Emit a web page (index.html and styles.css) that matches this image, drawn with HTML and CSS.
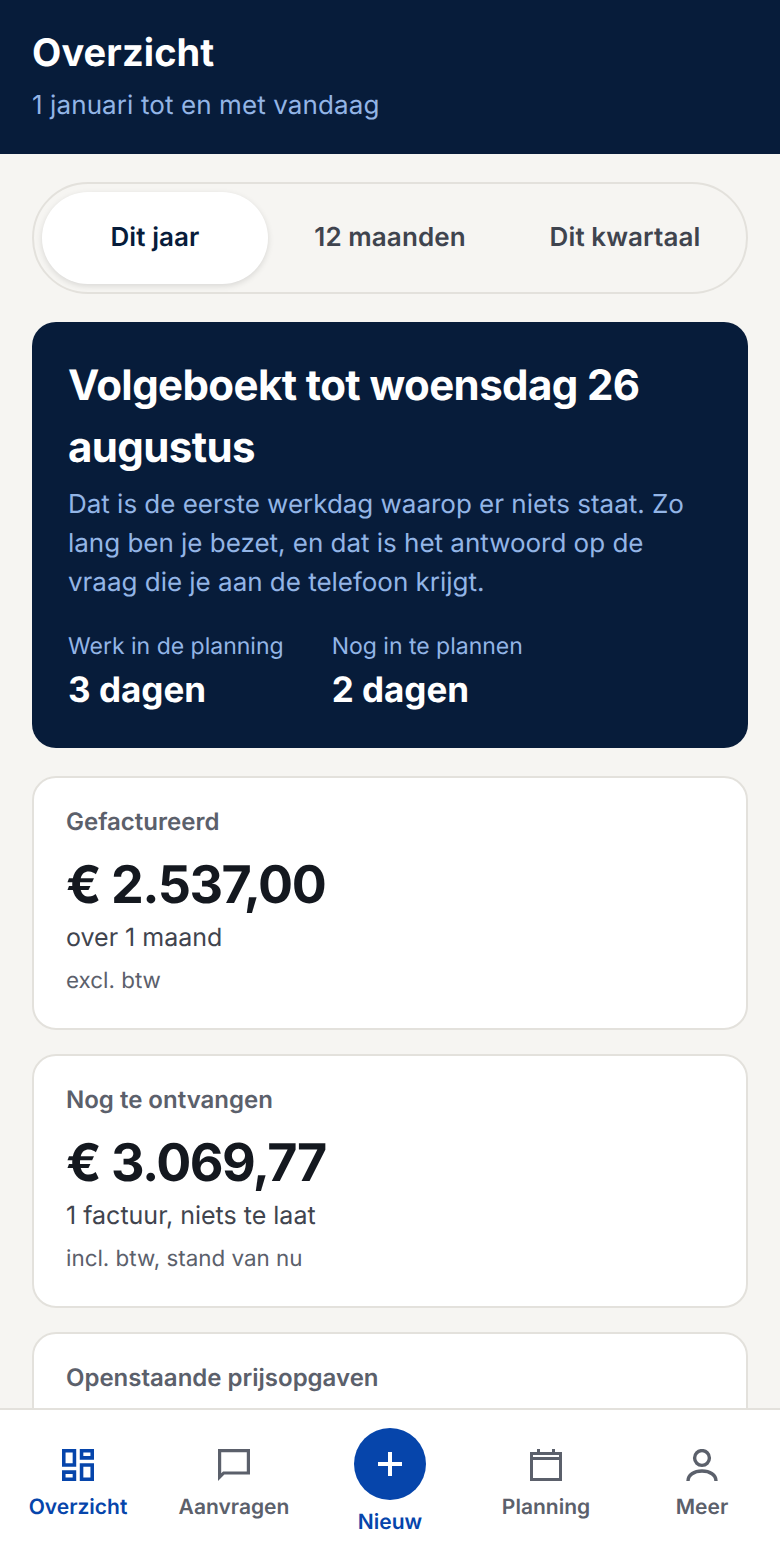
FILE: index.html
```html
<!DOCTYPE html>
<html lang="nl">
<head>
    <meta charset="UTF-8">
    <meta name="viewport" content="width=device-width, initial-scale=1.0">
    <title>Overzicht</title>
    <link rel="stylesheet" href="styles.css">
</head>
<body>
    <div class="app">
        <header class="page-header">
            <h1>Overzicht</h1>
            <p>1 januari tot en met vandaag</p>
        </header>

        <main class="content">
            <div class="period-switch">
                <div class="period-option active">Dit jaar</div>
                <div class="period-option">12 maanden</div>
                <div class="period-option">Dit kwartaal</div>
            </div>

            <section class="hero-card">
                <h2>Volgeboekt tot woensdag 26 augustus</h2>
                <p class="hero-text">Dat is de eerste werkdag waarop er niets staat. Zo lang ben je bezet, en dat is het antwoord op de vraag die je aan de telefoon krijgt.</p>
                <div class="hero-stats">
                    <div>
                        <div class="hero-label">Werk in de planning</div>
                        <div class="hero-value">3 dagen</div>
                    </div>
                    <div>
                        <div class="hero-label">Nog in te plannen</div>
                        <div class="hero-value">2 dagen</div>
                    </div>
                </div>
            </section>

            <section class="stat-card">
                <div class="stat-label">Gefactureerd</div>
                <div class="stat-amount">€ 2.537,00</div>
                <div class="stat-sub">over 1 maand</div>
                <div class="stat-note">excl. btw</div>
            </section>

            <section class="stat-card">
                <div class="stat-label">Nog te ontvangen</div>
                <div class="stat-amount">€ 3.069,77</div>
                <div class="stat-sub">1 factuur, niets te laat</div>
                <div class="stat-note">incl. btw, stand van nu</div>
            </section>

            <section class="stat-card">
                <div class="stat-label">Openstaande prijsopgaven</div>
            </section>
        </main>

        <nav class="bottom-nav">
            <div class="nav-item active">
                <svg class="nav-icon" viewBox="3 3 18 18" fill="currentColor"><path d="M19 5v2h-4V5h4M9 5v6H5V5h4m10 8v6h-4v-6h4M9 17v2H5v-2h4M21 3h-8v6h8V3zM11 3H3v10h8V3zm10 8h-8v10h8V11zm-10 4H3v6h8v-6z"/></svg>
                <span>Overzicht</span>
            </div>
            <div class="nav-item">
                <svg class="nav-icon" viewBox="2 2 20 20" fill="currentColor"><path d="M22 2H2v20l4-4h16V2zm-2 14H5.17L4 17.17V4h16v12z"/></svg>
                <span>Aanvragen</span>
            </div>
            <div class="nav-item nav-new">
                <div class="new-button">
                    <svg viewBox="0 0 24 24" fill="none" stroke="#fff" stroke-width="4"><path d="M12 0v24M0 12h24"/></svg>
                </div>
                <span>Nieuw</span>
            </div>
            <div class="nav-item">
                <svg class="nav-icon" viewBox="0 0 32 32" fill="none" stroke="currentColor" stroke-width="3"><path d="M1.5 4.5h29v26h-29zM1.5 9.5h29"/><path d="M8.5 0v5M23.5 0v5"/></svg>
                <span>Planning</span>
            </div>
            <div class="nav-item">
                <svg class="nav-icon" viewBox="0 0 32 32" fill="none" stroke="currentColor" stroke-width="3.4"><circle cx="16" cy="9" r="7.4"/><path d="M2 32c0-6 6-10 14-10s14 4 14 10"/></svg>
                <span>Meer</span>
            </div>
        </nav>
    </div>
</body>
</html>
```

FILE: styles.css
```css
* {
    box-sizing: border-box;
}

html, body {
    margin: 0;
    padding: 0;
}

body {
    font-family: Inter, "Liberation Sans", sans-serif;
    background-color: #f6f5f2;
    color: #14181f;
    text-rendering: geometricPrecision;
}

.app {
    display: flex;
    flex-direction: column;
    height: 1560px;
    overflow: hidden;
}

.page-header {
    background-color: #071c3a;
    height: 154px;
    padding: 31px 32px 0;
    flex-shrink: 0;
}

.page-header h1 {
    margin: 0;
    color: #fff;
    font-size: 38px;
    line-height: 44px;
    font-weight: 700;
    letter-spacing: 0.1px;
}

.page-header p {
    margin: 15px 0 0;
    color: #93b5e6;
    font-size: 26px;
    line-height: 32px;
    letter-spacing: 0.1px;
}

.content {
    flex: 1;
    overflow: hidden;
    padding: 28px 32px 0;
}

.period-switch {
    display: flex;
    gap: 9px;
    padding: 8px;
    border: 2px solid #e3e1dc;
    border-radius: 56px;
    margin-bottom: 28px;
}

.period-option {
    flex: 1;
    height: 92px;
    display: flex;
    align-items: center;
    justify-content: center;
    padding-bottom: 2px;
    border-radius: 46px;
    font-size: 26px;
    font-weight: 600;
    letter-spacing: 0.1px;
    color: #3f444e;
}

.period-option.active {
    background-color: #fff;
    color: #071c3a;
    box-shadow: 0 2px 6px rgba(0, 0, 0, 0.12);
}

.hero-card {
    background-color: #071c3a;
    border-radius: 24px;
    padding: 33px 36px 36px;
    margin-bottom: 28px;
}

.hero-card h2 {
    margin: 0;
    color: #fff;
    font-size: 42px;
    line-height: 62px;
    font-weight: 700;
    letter-spacing: -0.6px;
}

.hero-text {
    margin: 6px 0 0;
    color: #93b5e6;
    font-size: 26px;
    line-height: 39px;
    letter-spacing: -0.02px;
}

.hero-stats {
    display: flex;
    gap: 48px;
    margin-top: 28px;
}

.hero-label {
    color: #93b5e6;
    font-size: 23px;
    line-height: 32px;
}

.hero-value {
    color: #fff;
    font-size: 35px;
    line-height: 44px;
    font-weight: 700;
    margin-top: 6px;
}

.stat-card {
    background-color: #fff;
    border: 2px solid #e3e1dc;
    border-radius: 24px;
    min-height: 254px;
    padding: 30px 32px 32px;
    margin-bottom: 24px;
}

.stat-label {
    color: #5b606b;
    font-size: 24px;
    line-height: 28px;
    font-weight: 600;
}

.stat-amount {
    font-size: 52px;
    line-height: 60px;
    font-weight: 700;
    letter-spacing: -1.5px;
    margin-top: 19px;
}

.stat-sub {
    color: #3f444e;
    font-size: 25px;
    line-height: 34px;
    margin-top: 6px;
}

.stat-note {
    color: #5b606b;
    font-size: 22.4px;
    line-height: 30px;
    margin-top: 11px;
}

.bottom-nav {
    display: flex;
    flex-shrink: 0;
    height: 152px;
    background-color: #fff;
    border-top: 2px solid #e3e1dc;
}

.nav-item {
    width: 156px;
    display: flex;
    flex-direction: column;
    align-items: center;
    padding-top: 39px;
    color: #5b606b;
    font-size: 21px;
    line-height: 28px;
    font-weight: 600;
}

.nav-item.active, .nav-new {
    color: #0645ab;
}

.nav-icon {
    width: 32px;
    height: 32px;
    margin-bottom: 13px;
}

.nav-new {
    padding-top: 18px;
}

.new-button {
    width: 72px;
    height: 72px;
    border-radius: 50%;
    background-color: #0645ab;
    display: flex;
    align-items: center;
    justify-content: center;
    margin-bottom: 9px;
}

.new-button svg {
    width: 24px;
    height: 24px;
}
```
